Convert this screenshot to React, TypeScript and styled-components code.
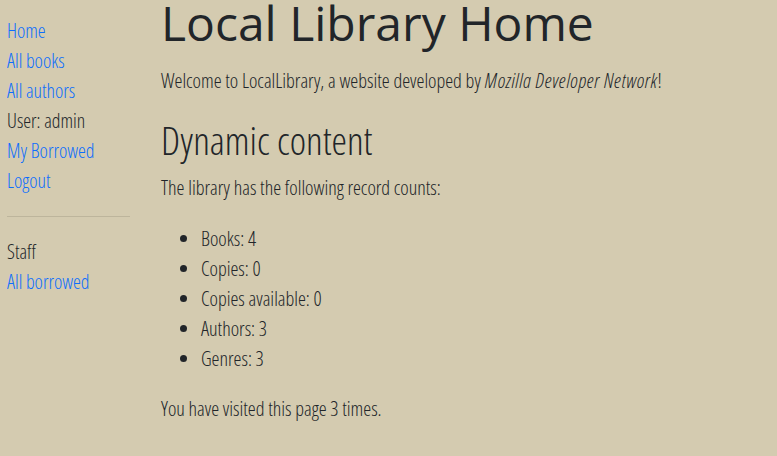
import React from "react";
import styled, { createGlobalStyle } from "styled-components";

const GlobalStyle = createGlobalStyle`
  html, body {
    margin: 0;
    padding: 0;
    background: #d4cbb0;
  }
  body {
    font-family: "Open Sans", "Liberation Sans", sans-serif;
    font-stretch: 75%;
    font-weight: 350;
    font-size: 20px;
    color: #212529;
  }
`;

const Page = styled.div`
  display: flex;
  align-items: flex-start;
  padding: 0 7px;
  min-height: 456px;
  box-sizing: border-box;
`;

const Sidebar = styled.nav`
  width: 123px;
  flex-shrink: 0;
  padding-top: 16px;
  font-size: 19.8px;
`;

const NavList = styled.ul`
  list-style: none;
  margin: 0;
  padding: 0;
`;

const NavItem = styled.li`
  line-height: 30px;
  height: 30px;
  white-space: nowrap;
`;

const NavLink = styled.a`
  color: #0d6efd;
  text-decoration: none;
`;

const Divider = styled.hr`
  border: 0;
  border-top: 1px solid #bdb59c;
  margin: 20px 0 20px;
`;

const Main = styled.main`
  flex: 1;
  padding-left: 31px;
`;

const Title = styled.h1`
  font-stretch: 100%;
  font-weight: 400;
  font-size: 48px;
  line-height: 46px;
  margin: 0 0 20px;
`;

const Para = styled.p<{ $gap?: number }>`
  margin: 0 0 ${(p) => p.$gap ?? 16}px;
  line-height: 30px;
`;

const Org = styled.em`
  letter-spacing: 0.6px;
`;

const Subtitle = styled.h2`
  font-weight: 300;
  font-size: 39px;
  line-height: 46px;
  margin: 0 0 10px;
`;

const Counts = styled.ul`
  margin: 0 0 20px;
  padding-left: 40px;
`;

const Count = styled.li`
  line-height: 30px;
`;

const sideLinks = ["Home", "All books", "All authors"];

export default function App() {
  return (
    <>
      <GlobalStyle />
      <Page>
        <Sidebar>
          <NavList>
            {sideLinks.map((l) => (
              <NavItem key={l}>
                <NavLink href="#">{l}</NavLink>
              </NavItem>
            ))}
            <NavItem>User: admin</NavItem>
            <NavItem>
              <NavLink href="#">My Borrowed</NavLink>
            </NavItem>
            <NavItem>
              <NavLink href="#">Logout</NavLink>
            </NavItem>
          </NavList>
          <Divider />
          <NavList>
            <NavItem>Staff</NavItem>
            <NavItem>
              <NavLink href="#">All borrowed</NavLink>
            </NavItem>
          </NavList>
        </Sidebar>
        <Main>
          <Title>Local Library Home</Title>
          <Para $gap={21}>
            Welcome to LocalLibrary, a website developed by{" "}
            <Org>Mozilla Developer Network</Org>!
          </Para>
          <Subtitle>Dynamic content</Subtitle>
          <Para $gap={21}>The library has the following record counts:</Para>
          <Counts>
            <Count>Books: 4</Count>
            <Count>Copies: 0</Count>
            <Count>Copies available: 0</Count>
            <Count>Authors: 3</Count>
            <Count>Genres: 3</Count>
          </Counts>
          <Para>You have visited this page 3 times.</Para>
        </Main>
      </Page>
    </>
  );
}
